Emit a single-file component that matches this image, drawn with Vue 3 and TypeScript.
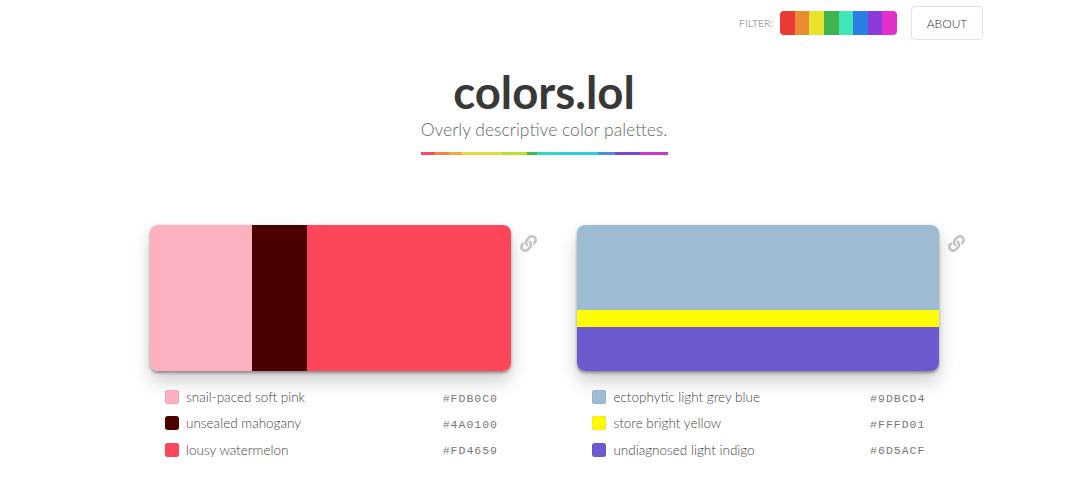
<script setup lang="ts">
interface Shade {
  name: string;
  hex: string;
  size: number;
}

interface Palette {
  direction: 'row' | 'column';
  shades: Shade[];
}

const filterColors = ['#ea3a32', '#e98b30', '#e9e22c', '#3fb350', '#3ee6b8', '#2a7fe2', '#8c3bd8', '#e230c8'];

const ruleStops = [
  ['#fb4a5e', 14],
  ['#f0873c', 14],
  ['#f4a544', 13],
  ['#e8dc3c', 40],
  ['#b9e02c', 25],
  ['#46b84f', 10],
  ['#2ed9bd', 21],
  ['#2bd0dc', 40],
  ['#4b8fdc', 17],
  ['#7a49cf', 25],
  ['#cc35d0', 28],
] as const;

const palettes: Palette[] = [
  {
    direction: 'row',
    shades: [
      { name: 'snail-paced soft pink', hex: '#FDB0C0', size: 102 },
      { name: 'unsealed mahogany', hex: '#4A0100', size: 55 },
      { name: 'lousy watermelon', hex: '#FD4659', size: 204 },
    ],
  },
  {
    direction: 'column',
    shades: [
      { name: 'ectophytic light grey blue', hex: '#9DBCD4', size: 85 },
      { name: 'store bright yellow', hex: '#FFFD01', size: 17 },
      { name: 'undiagnosed light indigo', hex: '#6D5ACF', size: 44 },
    ],
  },
];
</script>

<template>
  <div class="page">
    <nav class="top">
      <span class="filter-label">FILTER:</span>
      <div class="filter">
        <span v-for="c in filterColors" :key="c" :style="{ background: c }"></span>
      </div>
      <button class="about">ABOUT</button>
    </nav>

    <header class="head">
      <h1>colors.lol</h1>
      <p>Overly descriptive color palettes.</p>
      <div class="rule">
        <span v-for="s in ruleStops" :key="s[0]" :style="{ background: s[0], flexGrow: s[1] }"></span>
      </div>
    </header>

    <main class="palettes">
      <section v-for="(p, i) in palettes" :key="i" class="palette">
        <div class="swatch-row">
          <div class="swatch" :style="{ flexDirection: p.direction }">
            <div
              v-for="s in p.shades"
              :key="s.hex"
              :style="{ background: s.hex, flexGrow: s.size }"
            ></div>
          </div>
          <svg class="link" viewBox="0 0 512 512" width="17" height="17" aria-hidden="true">
            <path
              fill="#c4c4c4"
              d="M326.6 185.4c59.7 59.8 58.9 155.7.4 214.6l-67.2 67.2c-59.3 59.3-155.7 59.3-215 0-59.3-59.3-59.3-155.7 0-215l37.1-37.1c9.8-9.8 26.8-3.3 27.3 10.6.6 17.7 3.8 35.5 9.7 52.7 2 5.8.6 12.3-3.8 16.6l-13.1 13.1c-28 28-28.9 73.7-1.2 102 28 28.5 74 28.7 102.2.5l67.2-67.2c28.2-28.2 28.1-73.8 0-101.8-3.7-3.7-7.4-6.6-10.3-8.6-4.7-3.2-7.6-8.5-7.8-14.2-.4-10.6 3.3-21.5 11.7-29.8l21-21c5.5-5.5 14.2-6.2 20.5-1.8 7.3 5.1 14.1 10.8 20.4 17.1zM467.5 44.4c-59.3-59.3-155.7-59.3-215 0l-67.2 67.2-.4.4c-58.6 58.9-59.4 154.8.4 214.6 6.3 6.3 13.1 12 20.4 17.1 6.3 4.4 15 3.7 20.5-1.8l21-21c8.4-8.4 12.1-19.2 11.7-29.8-.2-5.7-3.1-11-7.8-14.2-2.9-2-6.6-4.9-10.3-8.6-28.1-28-28.2-73.6 0-101.8l67.2-67.2c28.2-28.2 74.2-28 102.2.5 27.7 28.3 26.8 74-1.2 102l-13.1 13.1c-4.4 4.3-5.8 10.8-3.8 16.6 5.9 17.2 9.1 35 9.7 52.7.5 13.9 17.5 20.4 27.3 10.6l37.1-37.1c59.3-59.3 59.3-155.7 0-215z"
            />
          </svg>
        </div>
        <ul class="legend">
          <li v-for="s in p.shades" :key="s.hex">
            <span class="chip" :style="{ background: s.hex }"></span>
            <span class="name">{{ s.name }}</span>
            <span class="hex">{{ s.hex }}</span>
          </li>
        </ul>
      </section>
    </main>
  </div>
</template>

<style>
body {
  background: #fff;
  overflow: hidden;
}
</style>

<style scoped>
.page {
  font-family: Lato, "Liberation Sans", sans-serif;
  color: #444;
}

.top {
  display: flex;
  justify-content: flex-end;
  align-items: center;
  gap: 7px;
  padding: 6px 97px 0 0;
}
.filter-label {
  font-size: 10.5px;
  font-weight: 300;
  color: #777;
}
.filter {
  display: flex;
  width: 117px;
  height: 24px;
  border-radius: 4px;
  overflow: hidden;
}
.filter span {
  flex: 1;
}
.about {
  width: 72px;
  height: 34px;
  margin-left: 7px;
  background: #fff;
  border: 1px solid #e2e2e2;
  border-radius: 4px;
  font-family: Lato, sans-serif;
  font-size: 12px;
  font-weight: 300;
  color: #333;
}

.head {
  display: flex;
  flex-direction: column;
  align-items: center;
  margin-top: 26px;
  padding-left: 8px;
}
h1 {
  margin: 0;
  font-family: Lato, sans-serif;
  font-size: 45.5px;
  font-weight: 700;
  line-height: 52px;
  color: #383838;
}
.head p {
  margin: 0;
  font-size: 17.5px;
  font-weight: 300;
  line-height: 24px;
  color: #666;
}
.rule {
  display: flex;
  width: 247px;
  height: 3px;
  margin-top: 10px;
}

.palettes {
  display: flex;
  gap: 40px;
  padding: 70px 0 0 150px;
}
.swatch-row {
  display: flex;
  align-items: flex-start;
  gap: 9px;
}
.swatch {
  display: flex;
  width: 361.4px;
  height: 146px;
  border-radius: 8px;
  overflow: hidden;
  box-shadow: 0 10px 18px rgba(0, 0, 0, 0.2), 0 2px 3px rgba(0, 0, 0, 0.35);
}
.swatch div {
  flex-basis: 0;
}
.link {
  margin-top: 10px;
}

.legend {
  list-style: none;
  margin: 13px 0 0;
  padding: 0 14px 0 15px;
  width: 333px;
}
.legend li {
  display: flex;
  align-items: center;
  height: 26.3px;
}
.chip {
  width: 14px;
  height: 14px;
  border-radius: 3px;
  box-shadow: inset 0 0 1px rgba(0, 0, 0, 0.4);
}
.name {
  flex: 1;
  margin-left: 7px;
  font-size: 13.5px;
  font-weight: 300;
  color: #3f3f3f;
}
.hex {
  margin-top: 2px;
  font-family: "Liberation Mono", monospace;
  font-size: 11.5px;
  letter-spacing: 1px;
  color: #777;
}
</style>
